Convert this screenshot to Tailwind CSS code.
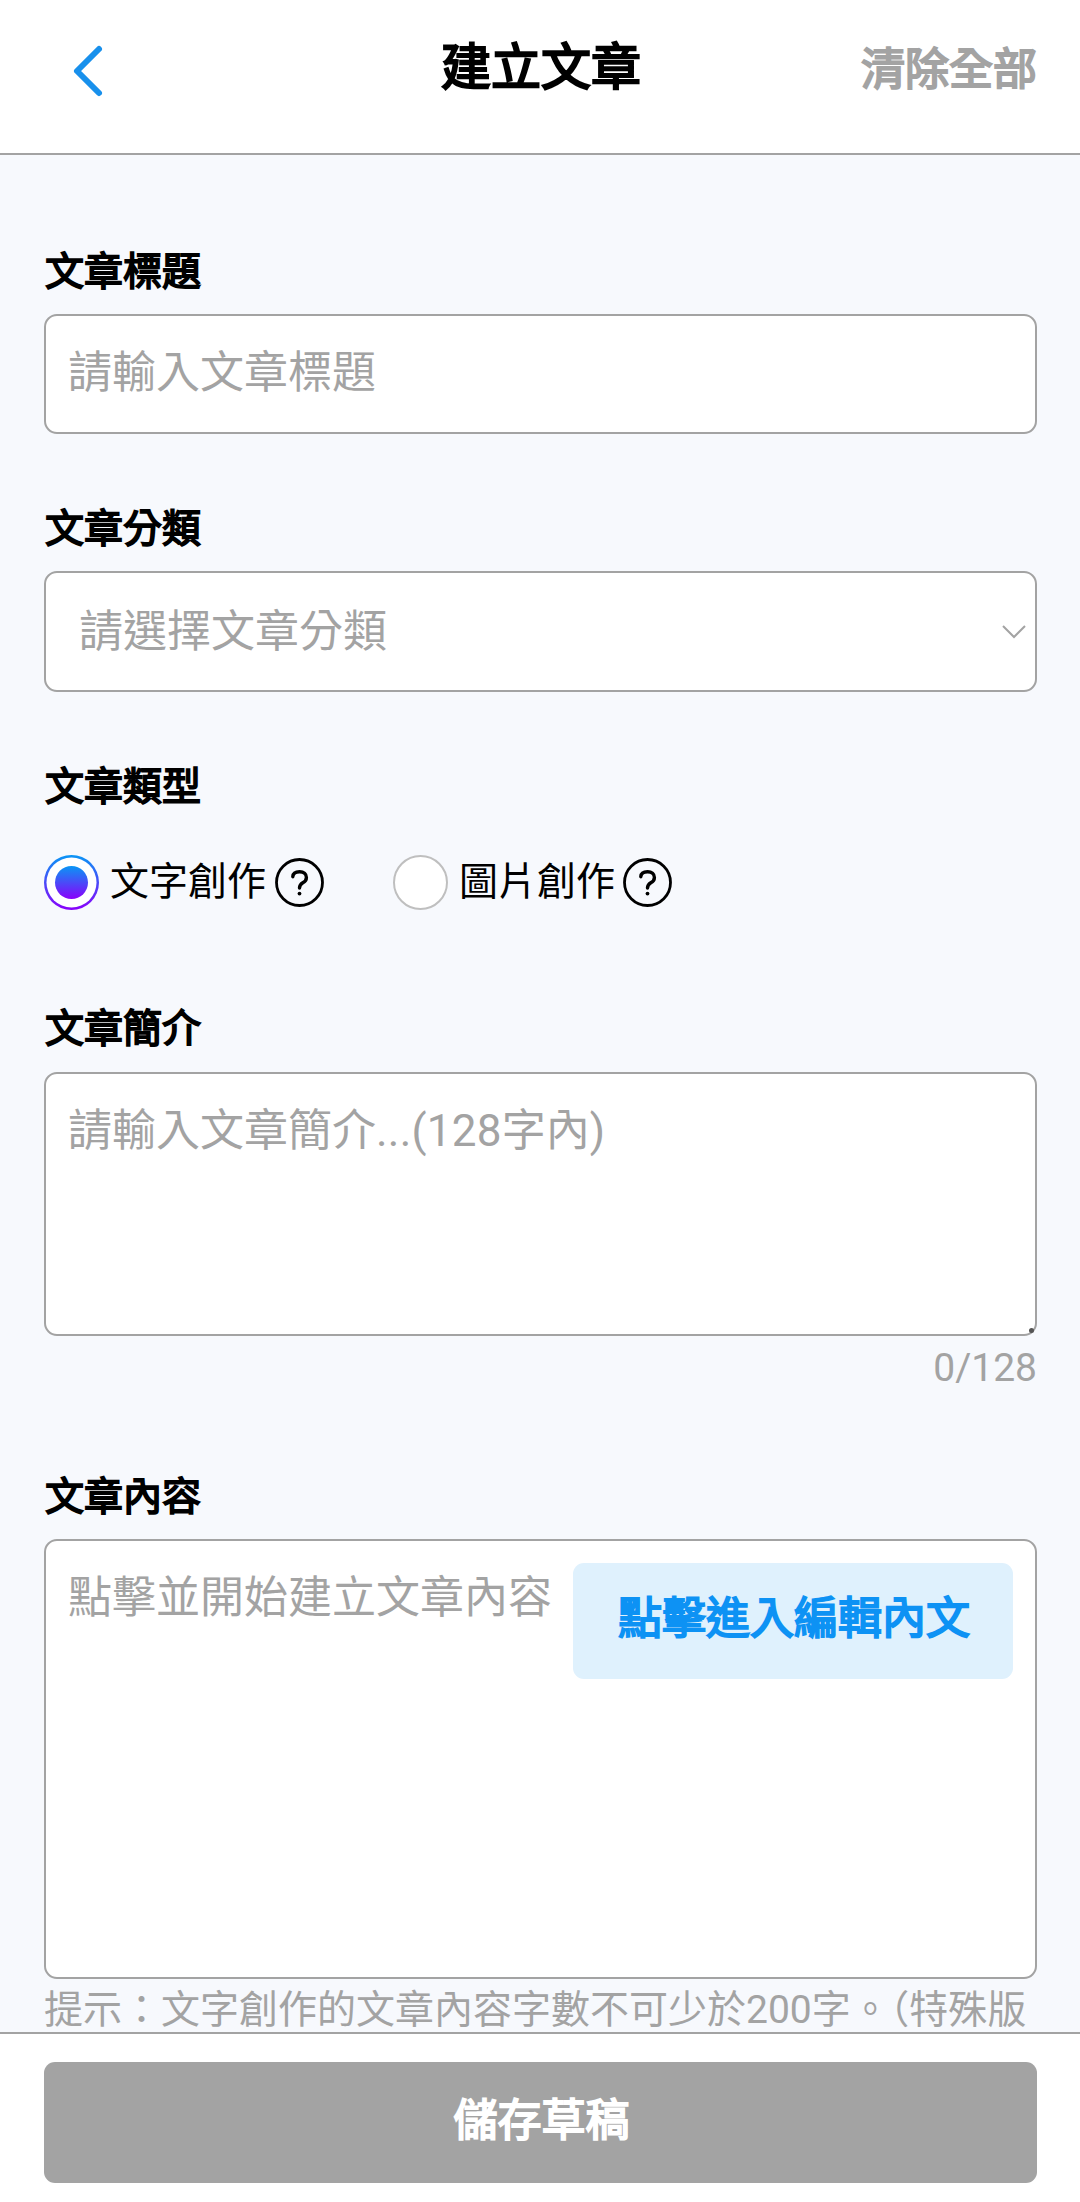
<!DOCTYPE html>
<html lang="zh-Hant">
<head>
<meta charset="UTF-8">
<title>建立文章</title>
<script src="https://cdn.jsdelivr.net/npm/@tailwindcss/browser@4"></script>
</head>
<body class="bg-[#f7f9fd] text-black font-[Roboto,'Noto_Sans_CJK_TC',sans-serif]">
<div class="flex h-[2202px] w-[1080px] flex-col overflow-hidden">
  <header class="grid h-[155px] shrink-0 grid-cols-3 items-start border-b-2 border-[#a3a3a3] bg-white px-[44px] pt-9">
    <button class="flex h-[70px] w-[88px] items-center justify-center" aria-label="返回">
      <svg class="h-[54px] w-[32px]" viewBox="0 0 32 54" fill="none" stroke="#1890ec" stroke-width="6" stroke-linecap="round" stroke-linejoin="round"><path d="M27 5 5 27 27 49"/></svg>
    </button>
    <h1 class="pt-px pl-[2px] text-center text-[50px] leading-[62px] font-normal [-webkit-text-stroke:0.045em_currentColor]">建立文章</h1>
    <button class="-mr-px justify-self-end pt-px text-[44px] leading-[66px] font-normal text-[#a3a3a3] [-webkit-text-stroke:0.045em_currentColor]">清除全部</button>
  </header>

  <main class="flex min-h-0 flex-1 flex-col overflow-hidden px-[44px]">
    <section class="mt-[88px]">
      <h2 class="h-[71px] pt-px pl-px text-[39px] leading-[56px] font-normal [-webkit-text-stroke:0.045em_currentColor]">文章標題</h2>
      <div class="flex h-[120px] w-[993px] items-start rounded-[13px] border-2 border-[#a3a3a3] bg-white px-[22px] pt-[29px] text-[44px] leading-[56px] text-[#a3a3a3]">請輸入文章標題</div>
    </section>

    <section class="mt-[66px]">
      <h2 class="h-[71px] pt-px pl-px text-[39px] leading-[56px] font-normal [-webkit-text-stroke:0.045em_currentColor]">文章分類</h2>
      <div class="flex h-[121px] w-[993px] items-center justify-between rounded-[13px] border-2 border-[#a3a3a3] bg-white pr-2 pl-[33px] text-[44px] leading-[56px] text-[#a3a3a3]">
        <span>請選擇文章分類</span>
        <svg class="h-[16px] w-[26px]" viewBox="0 0 26 16" fill="none" stroke="#a3a3a3" stroke-width="2"><path d="M2 2 13 13 24 2"/></svg>
      </div>
    </section>

    <section class="mt-[66px]">
      <h2 class="h-[97px] pt-px pl-px text-[39px] leading-[56px] font-normal [-webkit-text-stroke:0.045em_currentColor]">文章類型</h2>
      <div class="flex h-[55px] items-center text-[39px] leading-[55px]">
        <svg class="size-[55px]" viewBox="0 0 55 55">
          <defs><linearGradient id="ring" x1="0" y1="0" x2="0" y2="1"><stop offset="0" stop-color="#0996f5"/><stop offset="1" stop-color="#8a00fb"/></linearGradient></defs>
          <circle cx="27.5" cy="27.5" r="27.5" fill="url(#ring)"/>
          <circle cx="27.5" cy="27.5" r="25" fill="#fff"/>
          <circle cx="27.5" cy="27.5" r="16.5" fill="url(#ring)"/>
        </svg>
        <span class="-mt-px ml-[11px] w-[165px] whitespace-nowrap">文字創作</span>
        <svg class="size-[49px]" viewBox="0 0 49 49" fill="none" stroke="#000" stroke-width="2.8" stroke-linecap="round" stroke-linejoin="round"><circle cx="24.5" cy="24.5" r="23"/><path stroke-width="3.4" d="M17.8 18.7C18 15.3 20.6 13.7 24.6 13.7c4.2 0 6.8 2.3 6.8 5.7 0 2.6-1.3 4.1-3.6 5.4-2.3 1.4-3.3 2.8-3.3 5.2"/><circle cx="24.5" cy="35.6" r="1.9" fill="#000" stroke="none"/></svg>
        <span class="ml-[69px] size-[55px] rounded-full border-2 border-[#bfbfbf] bg-white"></span>
        <span class="-mt-px ml-[11px] w-[164px] whitespace-nowrap">圖片創作</span>
        <svg class="size-[49px]" viewBox="0 0 49 49" fill="none" stroke="#000" stroke-width="2.8" stroke-linecap="round" stroke-linejoin="round"><circle cx="24.5" cy="24.5" r="23"/><path stroke-width="3.4" d="M17.8 18.7C18 15.3 20.6 13.7 24.6 13.7c4.2 0 6.8 2.3 6.8 5.7 0 2.6-1.3 4.1-3.6 5.4-2.3 1.4-3.3 2.8-3.3 5.2"/><circle cx="24.5" cy="35.6" r="1.9" fill="#000" stroke="none"/></svg>
      </div>
    </section>

    <section class="mt-[90px]">
      <h2 class="h-[72px] pt-px pl-px text-[39px] leading-[56px] font-normal [-webkit-text-stroke:0.045em_currentColor]">文章簡介</h2>
      <div class="relative h-[264px] w-[993px] rounded-[13px] border-2 border-[#a3a3a3] bg-white px-[22px] pt-[29px] text-[44px] leading-[56px] text-[#a3a3a3]">請輸入文章簡介<span class="tracking-[0.25px]">...(128</span>字內)
        <span class="absolute right-[1px] bottom-[1px] size-[5px] rounded-sm bg-[#555]"></span>
      </div>
      <p class="mt-1 w-[993px] text-right text-[39px] leading-[56px] text-[#a3a3a3]">0/128</p>
    </section>

    <section class="mt-[72px]">
      <h2 class="h-[71px] pt-px pl-px text-[39px] leading-[56px] font-normal [-webkit-text-stroke:0.045em_currentColor]">文章內容</h2>
      <div class="flex h-[440px] w-[993px] items-start justify-between rounded-[13px] border-2 border-[#a3a3a3] bg-white px-[22px] pt-[22px]">
        <span class="pt-[7px] text-[44px] leading-[56px] whitespace-nowrap text-[#a3a3a3]">點擊並開始建立文章內容</span>
        <button class="flex h-[116px] w-[440px] items-start justify-center rounded-[11px] bg-[#dff1fd] pt-[28px] pl-[2px] text-[44px] leading-[56px] font-normal text-[#0d92f4] [-webkit-text-stroke:0.045em_currentColor]">點擊進入編輯內文</button>
      </div>
      <p class="mt-[3px] text-[39px] leading-[56px] whitespace-nowrap text-[#a3a3a3]">提示：文字創作的文章內容字數不可少於200字。（特殊版</p>
    </section>
  </main>

  <footer class="h-[170px] shrink-0 border-t-2 border-[#a3a3a3] bg-white px-[44px] pt-7">
    <button class="block h-[121px] w-[993px] rounded-[11px] bg-[#a3a3a3] pb-[3px] pl-[2px] text-center text-[44px] leading-[56px] font-normal text-white [-webkit-text-stroke:0.045em_currentColor]">儲存草稿</button>
  </footer>
</div>
</body>
</html>
